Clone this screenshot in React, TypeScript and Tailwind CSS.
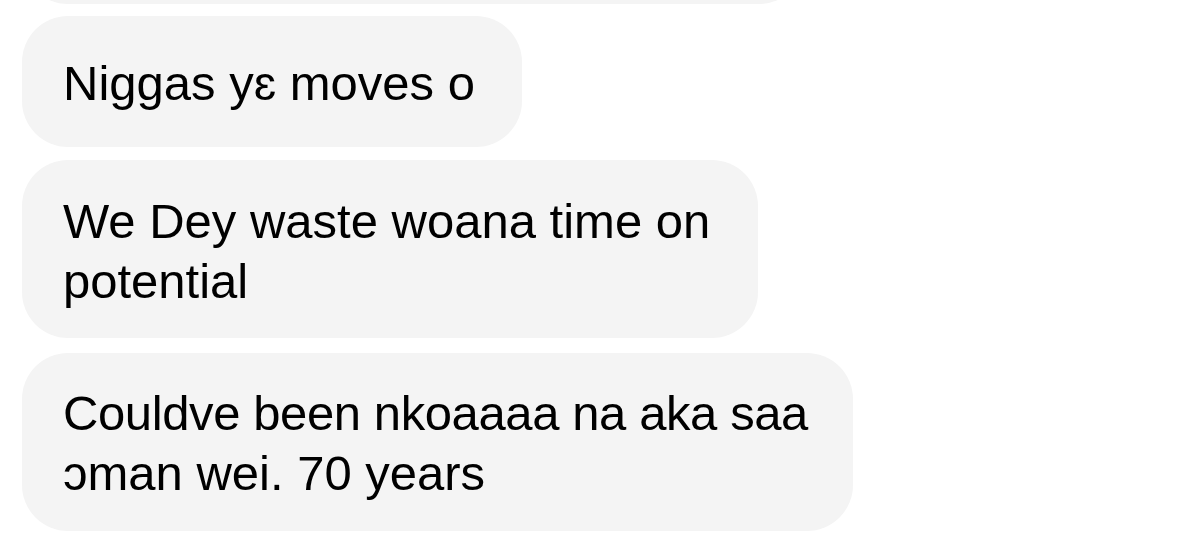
import React from "react";

interface BubbleProps {
	width: string;
	padY: string;
	children: React.ReactNode;
}

function Bubble({ width, padY, children }: BubbleProps) {
	return (
		<div
			className={`${width} ${padY} rounded-[46px] bg-[#f4f4f4] pl-[41px] text-[49px] leading-[60px] text-black whitespace-nowrap`}
		>
			{children}
		</div>
	);
}

export default function App() {
	return (
		<div
			className="h-[541px] w-[1197px] overflow-hidden bg-white pl-[22px]"
			style={{ fontFamily: '"Liberation Sans", Arial, sans-serif' }}
		>
			<div className="-mt-[116px] h-[120px] w-[783px] rounded-[46px] bg-[#f4f4f4]" />

			<div className="mt-[12px]">
				<Bubble width="w-[500px]" padY="pt-[37px] pb-[34px]">
					Niggas yɛ moves o
				</Bubble>
			</div>

			<div className="mt-[13px]">
				<Bubble width="w-[736px]" padY="pt-[31px] pb-[27px]">
					We Dey waste woana time on
					<br />
					potential
				</Bubble>
			</div>

			<div className="mt-[15px]">
				<Bubble width="w-[831px]" padY="pt-[30px] pb-[28px]">
					<span className="tracking-[-0.4px]">Couldve been nkoaaaa na aka saa</span>
					<br />
					ɔman wei. 70 years
				</Bubble>
			</div>
		</div>
	);
}
